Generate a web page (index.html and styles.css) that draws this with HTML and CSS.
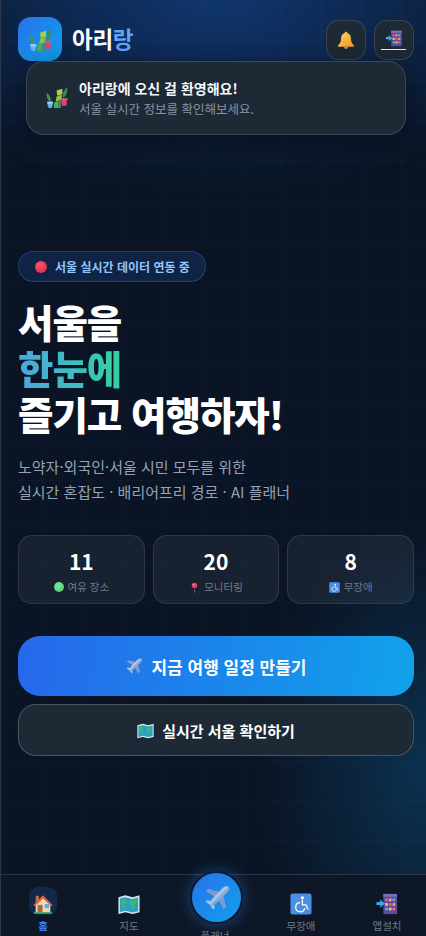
FILE: index.html
```html
<!DOCTYPE html>
<html lang="ko">
<head>
<meta charset="utf-8">
<title>아리랑</title>
<link rel="stylesheet" href="styles.css">
</head>
<body>
<svg class="defs" width="0" height="0" aria-hidden="true">
  <defs>
    <symbol id="bamboo" viewBox="0 0 24 24">
      <path d="M5 16.500C2 15 .5 11 .6 6.500C3.500 8 5.800 11.500 5 16.500Z" fill="#4b8f63"/>
      <path d="M18.500 12C17.800 7.500 19.500 3 23 .3C23.800 4.800 22.300 9.500 18.500 12Z" fill="#3f8a5a"/>
      <path d="M11.500 3.800L17.800 1.800L18 7.500L12.300 9.500Z" fill="#a5d24a"/>
      <path d="M11.500 10.300L17.500 8.300L16.800 14L10.600 16Z" fill="#8cc63f"/>
      <path d="M8.500 17L13.500 15.500L14 23H8.500Z" fill="#52ad50"/>
      <path d="M13.500 15.500L16.200 14.800L16 23H14Z" fill="#3d9a54"/>
      <path d="M1.400 16H7.600L7 21.200H6.200V23H2.800V21.200H2Z" fill="#68b8f0"/>
      <path d="M1.400 16H7.600L7.400 18H1.600Z" fill="#a4d6f8"/>
      <path d="M16.500 13.500H23L22.200 20.500H17.300Z" fill="#ea3a82"/>
      <path d="M16 12.300H23.500V14.200H16Z" fill="#b6793d"/>
    </symbol>
    <symbol id="bell" viewBox="0 0 24 24">
      <path d="M12 2C13 2 13.600 2.700 13.600 3.500C17 4.500 18 7.500 18 11C18 15 20 16.500 21.500 18.500C21.800 19.200 21.400 20 20.500 20H3.500C2.600 20 2.200 19.200 2.500 18.500C4 16.500 6 15 6 11C6 7.500 7 4.500 10.400 3.500C10.400 2.700 11 2 12 2Z" fill="url(#bellfill)"/>
      <path d="M9.500 20.500H14.500C14.300 22 13.300 22.800 12 22.800C10.700 22.800 9.700 22 9.500 20.500Z" fill="#e88a1f"/>
      <linearGradient id="bellfill" x1="0" y1="0" x2="1" y2="1"><stop offset="0" stop-color="#ffd35c"/><stop offset="1" stop-color="#f59a24"/></linearGradient>
    </symbol>
    <symbol id="install" viewBox="0 0 24 24">
      <rect x="8" y="1" width="15" height="22" fill="#5b4a9e"/>
      <rect x="8" y="1" width="15" height="3" fill="#7e6bc4"/>
      <rect x="10" y="6" width="3" height="3" fill="#ef5a6f"/><rect x="14" y="6" width="3" height="3" fill="#f7a13c"/><rect x="18" y="6" width="3" height="3" fill="#5aa9ee"/>
      <rect x="10" y="11" width="3" height="3" fill="#f7c844"/><rect x="14" y="11" width="3" height="3" fill="#ef5a6f"/><rect x="18" y="11" width="3" height="3" fill="#f7a13c"/>
      <rect x="10" y="16" width="3" height="3" fill="#5aa9ee"/><rect x="14" y="16" width="3" height="3" fill="#f7c844"/><rect x="18" y="16" width="3" height="3" fill="#f06292"/>
      <path d="M.5 9.800H4.500V7L9.500 11.500L4.500 16V13.200H.5Z" fill="#38a8f0"/>
    </symbol>
    <symbol id="plane" viewBox="0 0 24 24">
      <path d="M22 2.500C20.500 1.300 18.300 2 17 3.300L13.500 6.800L4.500 4.500L2.800 6.200L10 10.300L6.500 14.500L3.500 14L2.200 15.300L6 18L8.700 21.800L10 20.500L9.500 17.500L13.700 14L17.800 21.200L19.500 19.500L17.200 10.500L20.700 7C22 5.700 23.200 3.700 22 2.500Z" fill="#ccd5e8"/>
      <path d="M22 2.500C23.200 3.700 22 5.700 20.700 7L9 18.500L6 18Z" fill="#a3aed0"/>
      <path d="M4.500 4.500L13.500 6.800L10 10.300L2.800 6.200Z" fill="#9a9cc4"/>
      <path d="M17.800 21.200L13.700 14L17.200 10.500L19.500 19.500Z" fill="#9a9cc4"/>
    </symbol>
    <symbol id="map" viewBox="0 0 24 24">
      <path d="M.5 4.500L8 2.500L16 4.500L23.500 2.500V21L16 23L8 21L.5 23Z" fill="#d9e6f2"/>
      <path d="M2 6L8 4.500L16 6.500L22 4.800V19.800L16 21.300L8 19.300L2 21Z" fill="#2b9fc4"/>
      <path d="M3.500 7.500L8 6.500L9.500 10L7 13L8 17L5.500 16L3.500 11.500ZM13 8L17 8L20.500 7L21 10.500L17.500 12.500L18 16L15 18L14.500 13.500L12.500 11Z" fill="#3fb96b"/>
    </symbol>
    <symbol id="home" viewBox="0 0 24 24">
      <rect x="4" y="3" width="3.500" height="7" fill="#b9724a"/>
      <path d="M4 12L12 5L20 12V21H4Z" fill="#f2d7b6"/>
      <path d="M1.500 13L12 2.500L22.500 13L20.800 14.500L12 6L3.200 14.500Z" fill="#e8603c"/>
      <rect x="6" y="13" width="5.500" height="8" fill="#a56a4c"/>
      <rect x="14" y="12" width="4.500" height="4.500" fill="#4fb3ee"/>
      <rect x="2" y="21" width="20" height="1.500" fill="#5cc46d"/>
    </symbol>
    <symbol id="wheel" viewBox="0 0 24 24">
      <rect x=".5" y=".5" width="23" height="23" rx="2.500" fill="#4a90e2"/>
      <circle cx="13.500" cy="5.300" r="1.700" fill="#fff"/>
      <path d="M13.500 8V13H17.500L19.500 17.500" fill="none" stroke="#fff" stroke-width="1.400" stroke-linecap="round" stroke-linejoin="round"/>
      <path d="M10.500 10.500A5 5 0 1 0 16 17" fill="none" stroke="#fff" stroke-width="1.400" stroke-linecap="round"/>
    </symbol>
    <symbol id="pin" viewBox="0 0 24 24">
      <path d="M12 13L12.800 23H11.200Z" fill="#9aa5b4"/>
      <circle cx="12" cy="7.500" r="6" fill="#e83e6c"/>
      <circle cx="10" cy="5.500" r="1.500" fill="#f59ab5"/>
    </symbol>
  </defs>
</svg>

<div class="app">
  <header class="topbar">
    <div class="brand">
      <div class="logo"><svg class="logo-icon"><use href="#bamboo"/></svg></div>
      <div class="brand-name">아리<span class="accent">랑</span></div>
    </div>
    <div class="actions">
      <button class="icon-btn"><svg class="act-icon"><use href="#bell"/></svg></button>
      <button class="icon-btn"><svg class="act-icon install-icon"><use href="#install"/></svg><span class="ground"></span></button>
    </div>
  </header>

  <div class="toast">
    <svg class="toast-icon"><use href="#bamboo"/></svg>
    <div class="toast-text">
      <div class="toast-title">아리랑에 오신 걸 환영해요!</div>
      <div class="toast-sub">서울 실시간 정보를 확인해보세요.</div>
    </div>
  </div>

  <main class="hero">
    <div class="badge"><span class="dot"></span>서울 실시간 데이터 연동 중</div>
    <h1 class="headline">서울을<br><span class="grad">한눈에</span><br>즐기고 여행하자!</h1>
    <p class="lead">노약자·외국인·서울 시민 모두를 위한<br>실시간 혼잡도 · 배리어프리 경로 · AI 플래너</p>

    <div class="stats">
      <div class="stat"><div class="num">11</div><div class="cap"><span class="green"></span>여유 장소</div></div>
      <div class="stat"><div class="num">20</div><div class="cap"><svg class="cap-icon"><use href="#pin"/></svg>모니터링</div></div>
      <div class="stat"><div class="num">8</div><div class="cap"><svg class="cap-icon"><use href="#wheel"/></svg>무장애</div></div>
    </div>

    <button class="cta primary"><svg class="cta-icon"><use href="#plane"/></svg>지금 여행 일정 만들기</button>
    <button class="cta secondary"><svg class="cta-icon small"><use href="#map"/></svg>실시간 서울 확인하기</button>
  </main>

  <nav class="tabbar">
    <div class="tab active"><span class="tab-tile"><svg class="tab-icon"><use href="#home"/></svg></span><span class="tab-label">홈</span></div>
    <div class="tab"><span class="tab-tile"><svg class="tab-icon"><use href="#map"/></svg></span><span class="tab-label">지도</span></div>
    <div class="tab center"><span class="fab"><svg class="fab-icon"><use href="#plane"/></svg></span><span class="tab-label">플래너</span></div>
    <div class="tab"><span class="tab-tile"><svg class="tab-icon"><use href="#wheel"/></svg></span><span class="tab-label">무장애</span></div>
    <div class="tab"><span class="tab-tile"><svg class="tab-icon"><use href="#install"/></svg></span><span class="tab-label">앱설치</span></div>
  </nav>
</div>
</body>
</html>
```
FILE: styles.css
```css
* { box-sizing: border-box; }
html, body { margin: 0; padding: 0; height: 100%; }
body {
  width: 426px;
  height: 936px;
  overflow: hidden;
  background: #0a1424;
  color: #fff;
  font-family: "Noto Sans CJK KR", "Noto Sans", sans-serif;
}
.defs { position: absolute; }
button { font-family: inherit; }

.app {
  position: relative;
  width: 426px;
  height: 936px;
  overflow: hidden;
  display: flex;
  flex-direction: column;
  border-left: 1px solid #2b3648;
  background:
    linear-gradient(rgba(70, 120, 200, 0.05) 1px, transparent 1px) 0 0 / 40px 40px,
    linear-gradient(90deg, rgba(70, 120, 200, 0.05) 1px, transparent 1px) 0 0 / 40px 40px,
    radial-gradient(ellipse 380px 190px at 215px 0, rgba(20, 75, 160, 0.6), transparent 100%),
    radial-gradient(ellipse 170px 250px at 426px 770px, rgba(14, 90, 140, 0.42), transparent 100%),
    #0a1424;
}

.topbar {
  display: flex;
  justify-content: space-between;
  align-items: center;
  padding: 17px 12px 0 17px;
  height: 61px;
  flex: none;
}
.brand { display: flex; align-items: center; gap: 10px; }
.logo {
  width: 44px;
  height: 44px;
  border-radius: 13px;
  background: linear-gradient(135deg, #2673ea, #11a0ea);
  display: flex;
  align-items: center;
  justify-content: center;
}
.logo-icon { width: 23px; height: 23px; margin-top: 3px; }
.brand-name { font-size: 22.5px; font-weight: 700; letter-spacing: -0.3px; line-height: 30px; margin-bottom: 2px; }
.accent { color: #60a5fa; }
.actions { display: flex; gap: 8px; margin-top: 2px; }
.icon-btn {
  position: relative;
  width: 40px;
  height: 40px;
  border-radius: 13px;
  border: 1px solid rgba(255, 255, 255, 0.13);
  background: #1e2936;
  display: flex;
  align-items: center;
  justify-content: center;
  padding: 0;
}
.act-icon { width: 20px; height: 20px; }
.install-icon { width: 18px; height: 17px; margin-top: -3px; }
.ground {
  position: absolute;
  left: 6px;
  right: 7px;
  bottom: 9px;
  height: 1px;
  background: #e8edf4;
}

.toast {
  position: absolute;
  left: 25px;
  top: 61px;
  width: 380px;
  height: 74px;
  border-radius: 18px;
  border: 1px solid rgba(255, 255, 255, 0.14);
  background: #1e2936;
  box-shadow: 0 8px 28px rgba(0, 0, 0, 0.45);
  display: flex;
  align-items: center;
  gap: 11px;
  padding: 0 19px;
  z-index: 5;
}
.toast-icon { width: 22px; height: 22px; flex: none; }
.toast-title { font-size: 14px; font-weight: 700; line-height: 20px; color: #f5f7fa; }
.toast-sub { font-size: 12.5px; line-height: 20px; color: #8793a3; margin-top: 1px; }

.hero {
  flex: 1;
  display: flex;
  flex-direction: column;
  padding: 190px 12px 0 17px;
  min-height: 0;
}
.badge {
  align-self: flex-start;
  height: 31px;
  padding: 0 15px 0 16px;
  display: flex;
  align-items: center;
  gap: 8px;
  border-radius: 16px;
  border: 1px solid rgba(60, 120, 220, 0.35);
  background: rgba(37, 99, 200, 0.2);
  color: #93c5fd;
  font-size: 12px;
  font-weight: 700;
}
.dot {
  width: 12px;
  height: 12px;
  border-radius: 50%;
  background: radial-gradient(circle at 40% 35%, #fb5a68, #d91e42);
}
.headline {
  margin: 16px 0 0;
  font-size: 38.5px;
  line-height: 46px;
  font-weight: 900;
  letter-spacing: -1px;
  color: #fff;
}
.grad {
  background: linear-gradient(90deg, #4aa8df, #36d0a0);
  -webkit-background-clip: text;
  background-clip: text;
  color: transparent;
  padding-right: 1px;
}
.lead {
  margin: 18px 0 0;
  font-size: 15px;
  line-height: 25px;
  color: #94a3b4;
}
.stats {
  margin-top: 31px;
  display: grid;
  grid-template-columns: 1fr 1fr 1fr;
  gap: 8px;
}
.stat {
  height: 69px;
  border-radius: 14px;
  border: 1px solid rgba(255, 255, 255, 0.1);
  background: rgba(255, 255, 255, 0.06);
  display: flex;
  flex-direction: column;
  align-items: center;
  padding-top: 9px;
}
.num { font-size: 21px; font-weight: 700; line-height: 32px; color: #fff; }
.cap {
  display: flex;
  align-items: center;
  gap: 4px;
  font-size: 10.5px;
  line-height: 18px;
  color: #6f7b8c;
  margin-top: 1px;
}
.green {
  width: 10px;
  height: 10px;
  border-radius: 50%;
  background: radial-gradient(circle at 40% 35%, #7be89b, #46c277);
}
.cap-icon { width: 11px; height: 11px; }

.cta {
  display: flex;
  align-items: center;
  justify-content: center;
  gap: 8px;
  width: 100%;
  color: #fff;
  font-weight: 700;
  padding: 0;
  flex: none;
}
.primary {
  margin-top: 32px;
  height: 60px;
  border: 0;
  border-radius: 22px;
  background: linear-gradient(100deg, #2668ea, #11a2ea);
  font-size: 17px;
}
.secondary {
  margin-top: 8px;
  height: 52px;
  border-radius: 18px;
  border: 1px solid rgba(255, 255, 255, 0.2);
  background: #1e2936;
  font-size: 15px;
}
.cta-icon { width: 18px; height: 18px; opacity: 0.85; }
.cta-icon.small { width: 17px; height: 17px; opacity: 1; }

.tabbar {
  flex: none;
  width: 431px;
  margin-left: -1px;
  height: 62px;
  border-top: 1px solid #2a3649;
  background: #0e1726;
  display: grid;
  grid-template-columns: repeat(5, 86px);
  position: relative;
}
.tab {
  display: flex;
  flex-direction: column;
  align-items: center;
  padding-top: 12px;
}
.tab-tile {
  width: 28px;
  height: 28px;
  border-radius: 9px;
  display: flex;
  align-items: flex-end;
  justify-content: center;
  flex: none;
}
.active .tab-tile { background: #12294a; }
.tab-icon { width: 22px; height: 22px; }
.tab-label {
  font-size: 10.5px;
  font-weight: 500;
  line-height: 14px;
  margin-top: 4px;
  color: #5f6b7c;
}
.active .tab-label { color: #3b82f6; font-weight: 700; }
.center .tab-label { margin-top: 7px; }
.center { padding-top: 0; }
.fab {
  width: 49px;
  height: 49px;
  margin-top: -2px;
  margin-left: 3px;
  border-radius: 50%;
  background: linear-gradient(135deg, #2673ea, #11a0ea);
  display: flex;
  align-items: center;
  justify-content: center;
  box-shadow: 0 0 0 2px #0c1a30, 0 0 14px 3px rgba(40, 130, 240, 0.4);
  flex: none;
}
.fab-icon { width: 28px; height: 28px; opacity: 0.8; }
```
